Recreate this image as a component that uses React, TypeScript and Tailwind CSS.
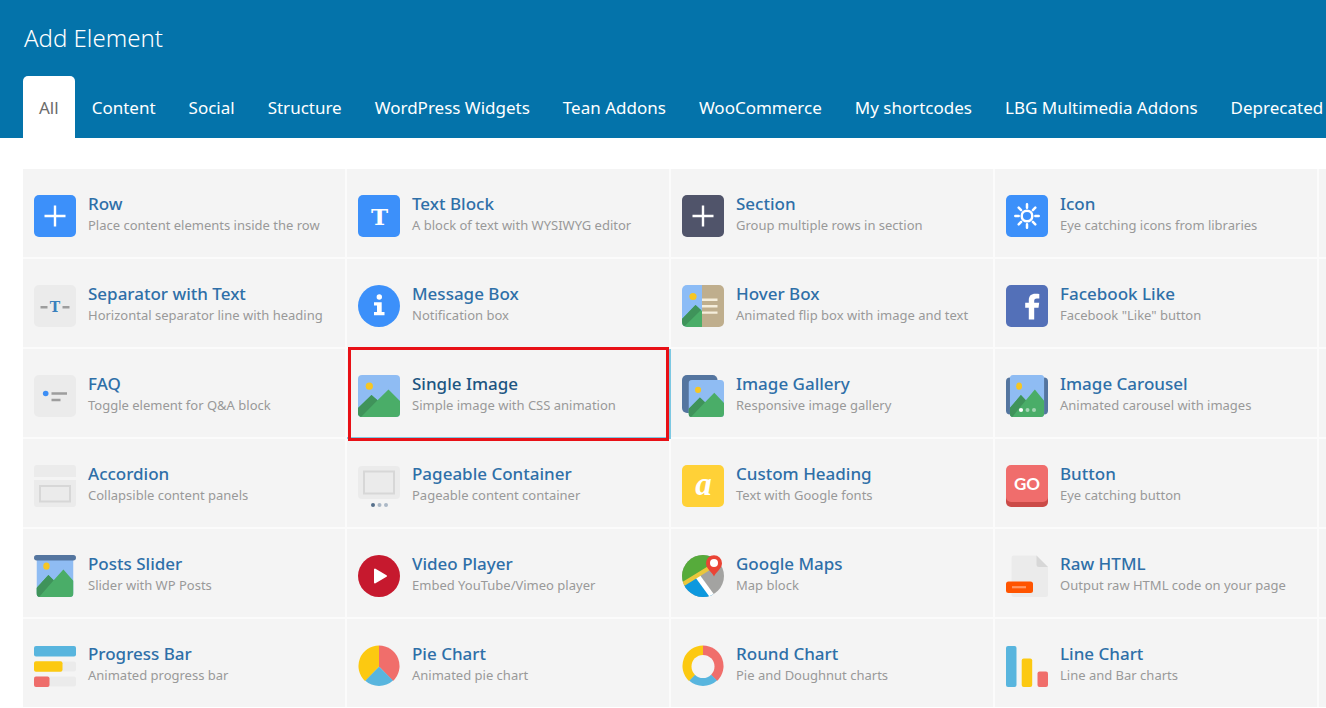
import type { ReactNode } from 'react';

const tabs = [
  'All',
  'Content',
  'Social',
  'Structure',
  'WordPress Widgets',
  'Tean Addons',
  'WooCommerce',
  'My shortcodes',
  'LBG Multimedia Addons',
  'Deprecated',
];

function Svg({ children }: { children: ReactNode }) {
  return (
    <svg viewBox="0 0 42 42" className="h-[42px] w-[42px] shrink-0" aria-hidden="true">
      {children}
    </svg>
  );
}

function PlusIcon({ color }: { color: string }) {
  return (
    <Svg>
      <rect width="42" height="42" rx="5" fill={color} />
      <path d="M21 10.5v21M10.5 21h21" stroke="#fff" strokeWidth="2.4" />
    </Svg>
  );
}

function TextBlockIcon() {
  return (
    <Svg>
      <rect width="42" height="42" rx="5" fill="#3c90fa" />
      <text x="21.5" y="30" textAnchor="middle" fill="#fff" fontSize="23" fontWeight="700" fontFamily="DejaVu Serif, serif">
        T
      </text>
    </Svg>
  );
}

function SunIcon() {
  return (
    <Svg>
      <rect width="42" height="42" rx="5" fill="#3c90fa" />
      <g stroke="#fff" strokeWidth="2.5" strokeLinecap="round" fill="none">
        <circle cx="21" cy="21" r="5.3" />
        <path d="M21 9.300v3.400M21 29.300v3.400M9.300 21h3.400M29.300 21h3.400M12.700 12.700l2.400 2.400M26.900 26.900l2.400 2.400M12.700 29.300l2.400-2.400M26.900 15.100l2.400-2.400" />
      </g>
    </Svg>
  );
}

function SeparatorIcon() {
  return (
    <Svg>
      <rect width="42" height="42" rx="5" fill="#ebebeb" />
      <path d="M6.500 22.200h7M28.500 22.200h7" stroke="#9d9d9d" strokeWidth="2.600" />
      <text x="21" y="26.500" textAnchor="middle" fill="#3a80bd" fontSize="14" fontWeight="700" fontFamily="DejaVu Serif, serif">
        T
      </text>
    </Svg>
  );
}

function InfoIcon() {
  return (
    <Svg>
      <circle cx="21" cy="21" r="21" fill="#3c90fa" />
      <circle cx="21.300" cy="12" r="2.700" fill="#fff" />
      <path d="M16 17.300h7.700v9.700h2.800v3.200H16V27h3v-6.500h-3z" fill="#fff" />
    </Svg>
  );
}

function HoverBoxIcon() {
  return (
    <Svg>
      <path d="M5 0h15v42H5a5 5 0 0 1-5-5V5a5 5 0 0 1 5-5z" fill="#8cbcf6" />
      <circle cx="11" cy="11.500" r="3.600" fill="#f6c623" />
      <path d="M0 34L13.500 20 20 26v16H5a5 5 0 0 1-5-5z" fill="#4aad68" />
      <path d="M0 34L13.500 20l5.500 5L2.500 41.300A5 5 0 0 1 0 37z" fill="#3f935a" />
      <path d="M20 0h17a5 5 0 0 1 5 5v32a5 5 0 0 1-5 5H20z" fill="#bfae8d" />
      <path d="M20 14.800h15.500M20 21.200h15.500M20 27.600h15.500" stroke="#f5eedc" strokeWidth="2.400" />
    </Svg>
  );
}

function FacebookIcon() {
  return (
    <Svg>
      <rect width="42" height="42" rx="5" fill="#5370b8" />
      <path
        d="M22.800 34.500V22.700h-3.600v-5h3.600v-2.300c0-4.600 2.400-6.700 6.600-6.700 1.500 0 2.900.1 3.900.300v4.600h-2.500c-2 0-2.600.9-2.600 2.400v1.700h5l-.7 5h-4.300v11.800z"
        fill="#fff"
      />
    </Svg>
  );
}

function FaqIcon() {
  return (
    <Svg>
      <rect width="42" height="42" rx="5" fill="#ebebeb" />
      <circle cx="11.700" cy="18.500" r="2.800" fill="#3c8ef5" />
      <path d="M17.500 18.500H33M17.500 25h9" stroke="#9d9d9d" strokeWidth="2.400" />
    </Svg>
  );
}

// Landscape shared by every picture-like element icon, drawn in a 42x42 box.
function Landscape() {
  return (
    <>
      <rect width="42" height="42" rx="4" fill="#8fbcf3" />
      <circle cx="11.300" cy="11.200" r="3.600" fill="#f6c623" />
      <path d="M0 33L13.500 20l6 5.200L30.500 14.500 42 26v12a4 4 0 0 1-4 4H4a4 4 0 0 1-4-4z" fill="#4aad68" />
      <path d="M0 33L13.500 20l6 5.200L3 41.900A4 4 0 0 1 0 38z" fill="#3f935a" />
    </>
  );
}

function SingleImageIcon() {
  return (
    <Svg>
      <Landscape />
    </Svg>
  );
}

function GalleryIcon() {
  return (
    <Svg>
      <rect width="35.500" height="38" rx="5" fill="#54759f" />
      <svg x="6.500" y="5" width="35.500" height="37" viewBox="0 0 42 42" preserveAspectRatio="none">
        <Landscape />
      </svg>
    </Svg>
  );
}

function CarouselIcon() {
  return (
    <Svg>
      <rect y="2.500" width="42" height="37" rx="4" fill="#54759f" />
      <svg x="3.800" y="0" width="34.500" height="42" viewBox="0 0 42 42" preserveAspectRatio="none">
        <Landscape />
      </svg>
      <circle cx="15" cy="35" r="2.100" fill="#fff" />
      <circle cx="21.500" cy="35" r="2" fill="#a3d5b2" />
      <circle cx="28" cy="35" r="2" fill="#a3d5b2" />
    </Svg>
  );
}

function AccordionIcon() {
  return (
    <Svg>
      <path d="M3 0h36a3 3 0 0 1 3 3v9H0V3a3 3 0 0 1 3-3zM0 15h42v24a3 3 0 0 1-3 3H3a3 3 0 0 1-3-3z" fill="#ebebeb" />
      <rect x="6" y="21" width="30" height="15.500" fill="none" stroke="#d7d7d7" strokeWidth="2" />
    </Svg>
  );
}

function PageableIcon() {
  return (
    <Svg>
      <rect x="0" y="1" width="42" height="33" rx="4" fill="#ebebeb" />
      <rect x="6" y="6.500" width="30" height="22" fill="none" stroke="#d7d7d7" strokeWidth="2" />
      <circle cx="15" cy="40" r="2" fill="#566f8b" />
      <circle cx="21.500" cy="40" r="2" fill="#abb8c6" />
      <circle cx="28" cy="40" r="2" fill="#abb8c6" />
    </Svg>
  );
}

function HeadingIcon() {
  return (
    <Svg>
      <rect width="42" height="42" rx="5" fill="#ffd137" />
      <text
        x="21.500"
        y="30"
        textAnchor="middle"
        fill="#fff"
        fontSize="33"
        fontStyle="italic"
        fontWeight="700"
        fontFamily="Liberation Serif, serif"
      >
        a
      </text>
    </Svg>
  );
}

function GoButtonIcon() {
  return (
    <Svg>
      <rect y="5" width="42" height="37" rx="5" fill="#cb4b48" />
      <rect width="42" height="37" rx="5" fill="#f06d6c" />
      <text x="21" y="24.500" textAnchor="middle" fill="#fff" fontSize="17" fontWeight="700" fontFamily="Lato, sans-serif">
        GO
      </text>
    </Svg>
  );
}

function SliderIcon() {
  return (
    <Svg>
      <svg x="2.500" y="0" width="37" height="42" viewBox="0 0 42 42" preserveAspectRatio="none">
        <Landscape />
      </svg>
      <rect width="42" height="5.500" rx="2.700" fill="#54759f" />
    </Svg>
  );
}

function PlayIcon() {
  return (
    <Svg>
      <circle cx="21" cy="21" r="21" fill="#c6192e" />
      <path d="M17 14.500v13L28 21z" fill="#fff" stroke="#fff" strokeWidth="2" strokeLinejoin="round" />
    </Svg>
  );
}

function MapIcon() {
  return (
    <Svg>
      <clipPath id="map-disc">
        <circle cx="21" cy="21" r="21" />
      </clipPath>
      <g clipPath="url(#map-disc)">
        <rect width="42" height="42" fill="#a3a3a1" />
        <path d="M-2 44V32L18 20.500 34 44z" fill="#0d98de" />
        <path d="M15.500 21l16 22" stroke="#fff" strokeWidth="5" />
        <path d="M-2-2h44v4L26 12 0 28z" fill="#56ab3b" />
        <path d="M-1 30.500L28 12.500" stroke="#eac73c" strokeWidth="4.400" />
      </g>
      <path d="M32 21.500c-1.500-4.300-8-7.500-8-13.300a8 8 0 0 1 16 0c0 5.800-6.500 9-8 13.300z" fill="#ea4435" />
      <circle cx="32" cy="8" r="4" fill="#fff" />
    </Svg>
  );
}

function RawHtmlIcon() {
  return (
    <Svg>
      <path d="M5.500 3a2.500 2.500 0 0 1 2.500-2.500h22.500L42 12v28a2 2 0 0 1-2 2H8a2.500 2.500 0 0 1-2.500-2.500z" fill="#ebebeb" />
      <path d="M30.500.5L42 12H33a2.500 2.500 0 0 1-2.500-2.500z" fill="#d7d7d7" />
      <rect y="26.500" width="27" height="11.500" rx="2.500" fill="#ff5400" />
      <path d="M6 32.200h14" stroke="#ff9864" strokeWidth="2.200" />
    </Svg>
  );
}

function ProgressIcon() {
  return (
    <Svg>
      <rect y="16.500" width="42" height="10" rx="2" fill="#ebebeb" />
      <rect y="31.500" width="42" height="10" rx="2" fill="#ebebeb" />
      <rect y="1" width="42" height="10.500" rx="2" fill="#58b5de" />
      <rect y="16.200" width="28.500" height="10.500" rx="2" fill="#fcc911" />
      <rect y="31.500" width="15.500" height="10.500" rx="2" fill="#ee6d6b" />
    </Svg>
  );
}

function ChartWedges() {
  return (
    <>
      <path d="M21 21.500V.5A20.500 20.500 0 0 1 35 36z" fill="#f06e6b" />
      <path d="M21 21.500L35 35.500a20.500 20.500 0 0 1-28 0z" fill="#58b5de" />
      <path d="M21 21.500L7 36A20.500 20.500 0 0 1 21 .5z" fill="#fcc911" />
    </>
  );
}

function PieIcon() {
  return (
    <Svg>
      <ChartWedges />
    </Svg>
  );
}

function DoughnutIcon() {
  return (
    <Svg>
      <ChartWedges />
      <circle cx="21" cy="21.500" r="11.500" fill="#f4f4f4" />
    </Svg>
  );
}

function BarsIcon() {
  return (
    <Svg>
      <rect y="1" width="10.500" height="41" rx="2" fill="#58b5de" />
      <rect x="15.700" y="13.500" width="10.500" height="28.500" rx="2" fill="#fcc911" />
      <rect x="31.500" y="26.500" width="10.500" height="15.500" rx="2" fill="#f06e6b" />
    </Svg>
  );
}

type Element = {
  title: string;
  description: string;
  icon: ReactNode;
  highlighted?: boolean;
};

const elements: Element[] = [
  { title: 'Row', description: 'Place content elements inside the row', icon: <PlusIcon color="#3c90fa" /> },
  { title: 'Text Block', description: 'A block of text with WYSIWYG editor', icon: <TextBlockIcon /> },
  { title: 'Section', description: 'Group multiple rows in section', icon: <PlusIcon color="#50546a" /> },
  { title: 'Icon', description: 'Eye catching icons from libraries', icon: <SunIcon /> },
  { title: 'Separator with Text', description: 'Horizontal separator line with heading', icon: <SeparatorIcon /> },
  { title: 'Message Box', description: 'Notification box', icon: <InfoIcon /> },
  { title: 'Hover Box', description: 'Animated flip box with image and text', icon: <HoverBoxIcon /> },
  { title: 'Facebook Like', description: 'Facebook "Like" button', icon: <FacebookIcon /> },
  { title: 'FAQ', description: 'Toggle element for Q&A block', icon: <FaqIcon /> },
  { title: 'Single Image', description: 'Simple image with CSS animation', icon: <SingleImageIcon />, highlighted: true },
  { title: 'Image Gallery', description: 'Responsive image gallery', icon: <GalleryIcon /> },
  { title: 'Image Carousel', description: 'Animated carousel with images', icon: <CarouselIcon /> },
  { title: 'Accordion', description: 'Collapsible content panels', icon: <AccordionIcon /> },
  { title: 'Pageable Container', description: 'Pageable content container', icon: <PageableIcon /> },
  { title: 'Custom Heading', description: 'Text with Google fonts', icon: <HeadingIcon /> },
  { title: 'Button', description: 'Eye catching button', icon: <GoButtonIcon /> },
  { title: 'Posts Slider', description: 'Slider with WP Posts', icon: <SliderIcon /> },
  { title: 'Video Player', description: 'Embed YouTube/Vimeo player', icon: <PlayIcon /> },
  { title: 'Google Maps', description: 'Map block', icon: <MapIcon /> },
  { title: 'Raw HTML', description: 'Output raw HTML code on your page', icon: <RawHtmlIcon /> },
  { title: 'Progress Bar', description: 'Animated progress bar', icon: <ProgressIcon /> },
  { title: 'Pie Chart', description: 'Animated pie chart', icon: <PieIcon /> },
  { title: 'Round Chart', description: 'Pie and Doughnut charts', icon: <DoughnutIcon /> },
  { title: 'Line Chart', description: 'Line and Bar charts', icon: <BarsIcon /> },
];

function ElementCard({ element }: { element: Element }) {
  return (
    <li className={element.highlighted ? 'relative z-10 bg-[#f4f4f4]' : 'bg-[#f4f4f4]'}>
      <a href="#" className="flex h-[88px] items-start gap-3 pt-[26px] pl-[11px]">
        {element.icon}
        <span className="flex min-w-0 flex-col whitespace-nowrap">
          <span
            className={
              element.highlighted
                ? 'text-[17px] leading-[18px] font-medium text-[#1c5581]'
                : 'text-[17px] leading-[18px] font-medium text-[#2e6fa8]'
            }
          >
            {element.title}
          </span>
          <span className="text-[13px] leading-6 text-[#999]">{element.description}</span>
        </span>
      </a>
      {element.highlighted && (
        <>
          <span className="absolute top-0 -right-0.5 -bottom-0.5 left-0 border-r-2 border-b-2 border-[#7cc8e2]" />
          <span className="absolute -top-0.5 right-0 -bottom-1 left-px border-3 border-[#e81016]" />
        </>
      )}
    </li>
  );
}

export default function App() {
  return (
    <div className="flex h-screen flex-col overflow-hidden bg-white font-['Noto_Sans',sans-serif]">
      <header className="bg-[#0473aa] pt-5 pl-[23px]">
        <h1 className="pl-px text-2xl leading-9 font-light text-white">Add Element</h1>
        <nav className="mt-5 flex gap-px overflow-hidden" aria-label="Element categories">
          {tabs.map((tab, i) => (
            <button
              key={tab}
              type="button"
              className={
                i === 0
                  ? 'h-[62px] shrink-0 rounded-t-[5px] bg-white px-4 pt-0.5 text-[17px] text-[#6b6b6b]'
                  : 'h-[62px] shrink-0 px-4 pt-0.5 text-[17px] whitespace-nowrap text-white'
              }
            >
              {tab}
            </button>
          ))}
        </nav>
      </header>

      <main className="flex-1 overflow-hidden pt-[31px] pl-[23px]">
        <div className="flex gap-0.5 bg-[#fbfbfb]">
          <ul className="grid flex-1 grid-cols-4 gap-0.5">
            {elements.map((element) => (
              <ElementCard key={element.title} element={element} />
            ))}
          </ul>
          {/* Start of the next column, cut off by the panel edge */}
          <div className="grid w-[7px] gap-0.5">
            {[0, 1, 2, 3, 4, 5].map((row) => (
              <div key={row} className="bg-[#f4f4f4]" />
            ))}
          </div>
        </div>
      </main>
    </div>
  );
}
